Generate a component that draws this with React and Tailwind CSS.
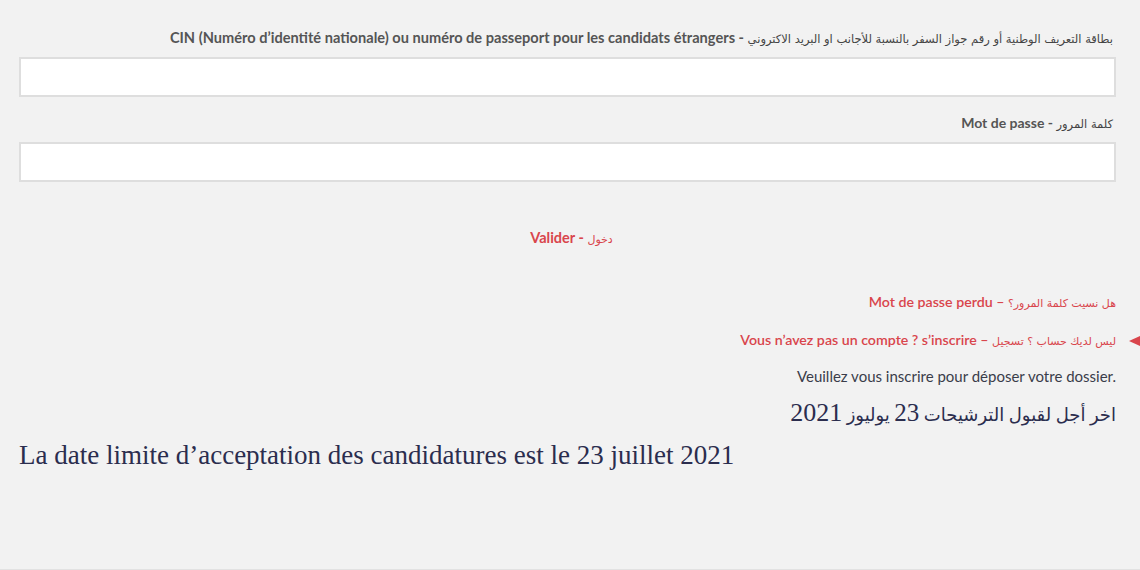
const lato = { fontFamily: "Lato, 'Noto Sans', sans-serif" };

function Ar({ children, className = "text-[11px] font-normal" }) {
  return (
    <span className={"leading-none " + className} style={{ fontFamily: "'DejaVu Sans', sans-serif" }}>
      {children}
    </span>
  );
}

function Field({ latin, arabic, size, top }) {
  return (
    <div className={top}>
      <label className={"block text-right font-bold text-[#555] leading-[18px] mb-[10px] pr-[3px] " + size}>
        {latin} - <Ar className="text-[11.5px] font-normal text-[#444]">{arabic}</Ar>
      </label>
      <input
        type="text"
        className="block w-full h-[40px] bg-white border-2 border-[#dedede] outline-none"
      />
    </div>
  );
}

export default function App() {
  return (
    <div className="relative w-[1140px] h-[570px] bg-[#f2f2f2] overflow-hidden border-b border-[#e2e2e2]" style={lato}>
      <div className="pl-[19px] pr-[24px] pt-[29px]">
        <Field
          top=""
          size="text-[14.6px]"
          latin="CIN (Numéro d’identité nationale) ou numéro de passeport pour les candidats étrangers"
          arabic="بطاقة التعريف الوطنية أو رقم جواز السفر بالنسبة للأجانب او البريد الاكتروني"
        />
        <Field top="mt-[17px]" size="text-[14px]" latin="Mot de passe" arabic="كلمة المرور" />

        <div className="mt-[47px] text-center text-[14.5px] font-bold text-[#d9454c] leading-[18px] pl-[8px]">
          Valider - <Ar>دخول</Ar>
        </div>

        <div className="mt-[46px] flex flex-col items-end gap-[20px] text-[14.2px] text-[#d9454c] leading-[18px]">
          <div className="font-semibold">
            Mot de passe perdu – <Ar>هل نسيت كلمة المرور؟</Ar>
          </div>
          <div className="font-semibold">
            Vous n’avez pas un compte ? s’inscrire – <Ar>ليس لديك حساب ؟ تسجيل</Ar>
          </div>
          <div className="text-[15px] text-[#3a3d4a] -mt-[2px]">Veuillez vous inscrire pour déposer votre dossier.</div>
        </div>

        <div
          className="mt-[15px] text-right text-[18px] text-[#2b2d4e] leading-[28px]"
          style={{ fontFamily: "'Liberation Serif', 'DejaVu Sans', serif" }}
        >
          اخر أجل لقبول الترشيحات <span className="text-[25px] leading-none">23</span> يوليوز{" "}
          <span className="text-[26px] leading-none">2021</span>
        </div>
        <div
          className="mt-[11px] text-[27px] text-[#2b2d4e] leading-[30px]"
          style={{ fontFamily: "'Liberation Serif', serif" }}
        >
          La date limite d’acceptation des candidatures est le 23 juillet 2021
        </div>
      </div>

      <div className="absolute left-[1129px] top-[336px] w-0 h-0 border-y-[5px] border-y-transparent border-r-[11px] border-r-[#d9454c]" />
    </div>
  );
}
